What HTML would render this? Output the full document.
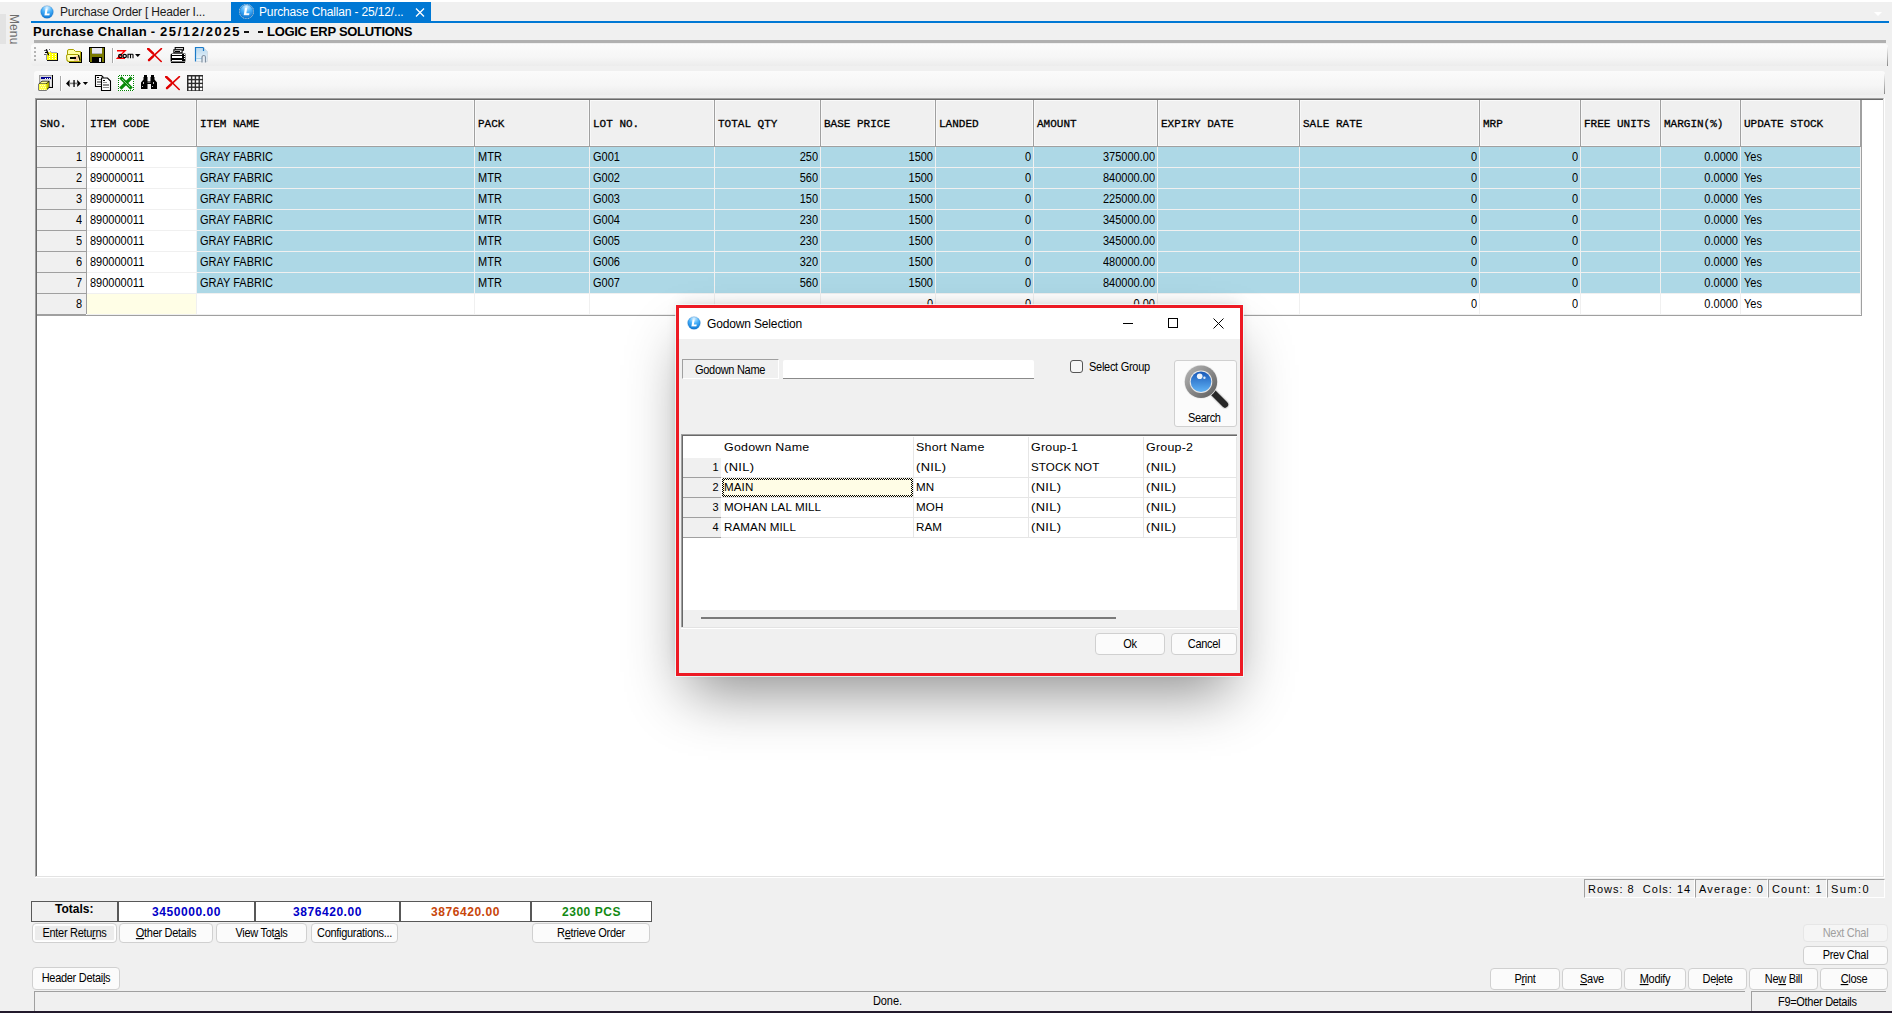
<!DOCTYPE html><html><head><meta charset="utf-8"><title>Purchase Challan</title><style>
*{box-sizing:border-box;margin:0;padding:0}
html,body{width:1892px;height:1013px;overflow:hidden}
body{position:relative;background:#f0f0f0;font-family:"Liberation Sans", sans-serif;font-size:11px;color:#000}
.ab{position:absolute}
.ms{transform:scaleY(1.125);transform-origin:0 10px}
.btn span{display:inline-block;transform:scaleY(1.125);transform-origin:0 75%}
.t{position:absolute;white-space:pre;line-height:1}
.hd{position:absolute;font:11px "Liberation Mono", monospace;-webkit-text-stroke:0.3px #000;white-space:pre;line-height:1}
.btn u{text-decoration:underline;text-underline-offset:1px}
.btn{position:absolute;background:#fbfbfb;border:1px solid #d0d0d0;border-radius:4px;text-align:center;white-space:pre;font-size:11px;letter-spacing:-0.3px}
.sunk{position:absolute;border-top:1px solid #a0a0a0;border-left:1px solid #a0a0a0;border-right:1px solid #fff;border-bottom:1px solid #fff}
</style></head><body>
<div class="ab" style="left:0;top:0;width:1892px;height:2px;background:#fff"></div>
<div class="ab" style="left:0;top:14px;width:6px;height:30px;background:#e3e3e3"></div>
<div class="t" style="left:8px;top:14px;writing-mode:vertical-rl;font-size:12px;color:#6d6d6d;letter-spacing:0.1px">Menu</div>
<svg class="ab" style="left:40px;top:5px" width="14" height="14" viewBox="0 0 14 14"><defs><radialGradient id="lg1" cx="0.5" cy="0.15" r="0.9"><stop offset="0" stop-color="#d8f0ff"/><stop offset="0.45" stop-color="#48b0fa"/><stop offset="1" stop-color="#0470d0"/></radialGradient></defs><circle cx="7" cy="7" r="6.3" fill="url(#lg1)" stroke="#1060b0" stroke-opacity="0.45" stroke-width="0.6"/><path d="M5.6 3.6h2.1l-0.85 5.0h2.9l-0.4 1.9H4.4z" fill="#fff"/><path d="M4.6 10.6h4.9" stroke="#0a4a90" stroke-opacity="0.35" stroke-width="0.5"/></svg>
<div class="t" style="left:60px;top:6px;font-size:12px;color:#1a1a1a;letter-spacing:-0.2px">Purchase Order [ Header I...</div>
<div class="ab" style="left:231px;top:2px;width:200px;height:20px;background:#0078d4"></div>
<svg class="ab" style="left:239px;top:4px" width="15" height="15" viewBox="0 0 14 14"><defs><radialGradient id="lg2" cx="0.5" cy="0.15" r="0.9"><stop offset="0" stop-color="#d8f0ff"/><stop offset="0.45" stop-color="#48b0fa"/><stop offset="1" stop-color="#0470d0"/></radialGradient></defs><circle cx="7" cy="7" r="6.3" fill="url(#lg2)" stroke="#1060b0" stroke-opacity="0.45" stroke-width="0.6"/><circle cx="7" cy="7" r="6.7" fill="none" stroke="#e8e0d8" stroke-width="0.8" stroke-dasharray="1 0.6"/><path d="M5.6 3.6h2.1l-0.85 5.0h2.9l-0.4 1.9H4.4z" fill="#fff"/><path d="M4.6 10.6h4.9" stroke="#0a4a90" stroke-opacity="0.35" stroke-width="0.5"/></svg>
<div class="t" style="left:259px;top:6px;font-size:12px;color:#fff;letter-spacing:-0.15px">Purchase Challan - 25/12/...</div>
<svg class="ab" style="left:415px;top:8px" width="10" height="9" viewBox="0 0 10 9"><path d="M1 0.5L9 8.5M9 0.5L1 8.5" stroke="#fff" stroke-width="1.3"/></svg>
<div class="ab" style="left:31px;top:21px;width:1858px;height:2px;background:#0078d4"></div>
<svg class="ab" style="left:1874px;top:12px" width="8" height="4" viewBox="0 0 8 4"><path d="M0 0h8L4 4z" fill="#fff"/></svg>
<div class="t" style="left:33px;top:25px;font-weight:bold;font-size:13px;letter-spacing:0.3px;color:#000">Purchase Challan -</div>
<div class="t" style="left:160px;top:25px;font-weight:bold;font-size:13px;letter-spacing:1.6px;color:#000">25/12/2025</div>
<div class="t" style="left:267px;top:25px;font-weight:bold;font-size:13px;letter-spacing:-0.3px;color:#000">LOGIC ERP SOLUTIONS</div>
<div class="ab" style="left:244px;top:31px;width:5px;height:2px;background:#111"></div>
<div class="ab" style="left:258px;top:31px;width:5px;height:2px;background:#111"></div>
<div class="ab" style="left:34px;top:40px;width:1852px;height:3px;background:#b0b0b0"></div>
<div class="ab" style="left:31px;top:44px;width:1857px;height:22px;border-radius:3px;background:linear-gradient(#fbfbfb,#f6f6f6 60%,#ececec)"></div>
<div class="ab" style="left:34px;top:71px;width:1851px;height:24px;border-radius:3px;background:linear-gradient(#fbfbfb,#f6f6f6 60%,#ececec)"></div>
<div class="ab" style="left:1887px;top:46px;width:1px;height:20px;background:linear-gradient(rgba(160,160,160,0),#8a8a8a)"></div>
<div class="ab" style="left:1884px;top:73px;width:1px;height:21px;background:linear-gradient(rgba(160,160,160,0),#8a8a8a)"></div>
<div class="ab" style="left:34px;top:47px;width:2px;height:2px;background:#b4b4b4"></div>
<div class="ab" style="left:34px;top:51px;width:2px;height:2px;background:#b4b4b4"></div>
<div class="ab" style="left:34px;top:55px;width:2px;height:2px;background:#b4b4b4"></div>
<div class="ab" style="left:34px;top:59px;width:2px;height:2px;background:#b4b4b4"></div>
<svg class="ab" style="left:43px;top:48px" width="16" height="14" viewBox="43 48 16 14" ><defs><pattern id="ydots" x="0" y="0" width="3" height="2" patternUnits="userSpaceOnUse"><rect width="3" height="2" fill="#ffff00"/><rect x="1" y="0" width="1" height="1" fill="#fffff0"/></pattern></defs><rect x="47" y="60" width="10" height="1" fill="#101018"/><rect x="57" y="53" width="1" height="8" fill="#101018"/><rect x="47" y="52" width="10" height="8" fill="url(#ydots)"/><rect x="46" y="54" width="1" height="6" fill="#9090a0"/><rect x="50" y="51" width="1" height="1" fill="#a8a8c0"/><rect x="51" y="52" width="6" height="1" fill="#a8a8c0"/><rect x="49" y="52" width="1" height="1" fill="#ffff60"/><path d="M46.3 49.2 L48.6 55.2" stroke="#000" stroke-width="1.3"/><rect x="45" y="52" width="3" height="1" fill="#000"/><rect x="44" y="50" width="2" height="1" fill="#606068"/><rect x="44" y="54" width="2" height="1" fill="#606068"/><rect x="49" y="49" width="1" height="1" fill="#606068"/></svg>
<svg class="ab" style="left:65px;top:48px" width="18" height="16" viewBox="65 48 18 16" ><rect x="69" y="62" width="13" height="1" fill="#000"/><rect x="81" y="52" width="1" height="11" fill="#000"/><path d="M67.5 54 V51 Q67.5 49.5 69 49.5 H73.5 L75.5 51.5 H80.5 V61.5 H69 Q67 61.5 67 60 Z" fill="#ffffa0" stroke="#a8a000" stroke-width="1"/><path d="M66.5 56 Q66.5 54.5 68 54.5 H78 L80.5 61.5 H69 Q67 61.5 67 59.5 Z" fill="#ffffb0" stroke="#a8a000" stroke-width="1"/><rect x="74" y="56" width="4" height="5" fill="#f8c8a0"/><rect x="70" y="57" width="6" height="2" fill="#000"/><path d="M78.5 55 L80 60.5" stroke="#000" stroke-width="1.1"/></svg>
<svg class="ab" style="left:89px;top:47px" width="16" height="16" viewBox="89 47 16 16" ><rect x="89" y="47" width="16" height="16" fill="#000"/><rect x="90" y="48" width="2" height="14" fill="#7a7a00"/><rect x="102" y="48" width="2" height="14" fill="#7a7a00"/><rect x="92" y="54" width="10" height="3" fill="#7a7a00"/><rect x="92" y="48" width="10" height="6" fill="#e8e8f0"/><rect x="92" y="53" width="10" height="1" fill="#b0b0b8"/><rect x="99" y="58" width="2" height="4" fill="#e8e8f0"/><rect x="89" y="62" width="1" height="1" fill="#f8f8f8"/></svg>
<div class="ab" style="left:112px;top:48px;width:1px;height:15px;background:#a8a8a8"></div>
<div class="ab" style="left:113px;top:48px;width:1px;height:15px;background:#fff"></div>
<svg class="ab" style="left:116px;top:49px" width="26" height="11" viewBox="116 49 26 11" ><path d="M117 50.7 H125 L117.5 58.2 H125" stroke="#ff0000" stroke-width="1.5" fill="none" stroke-linejoin="miter"/><circle cx="120.3" cy="56" r="1.7" fill="none" stroke="#000" stroke-width="1.2"/><circle cx="124.7" cy="56" r="1.7" fill="none" stroke="#000" stroke-width="1.2"/><path d="M128 58.3 V54.3 H132.5 Q133 54.3 133 55 V58.3 M130.5 54.3 V58.3" stroke="#000" stroke-width="1.1" fill="none"/><path d="M135 54 H140.5 L137.75 57 Z" fill="#000"/></svg>
<svg class="ab" style="left:147px;top:48px" width="16" height="15" viewBox="147 48 16 15" ><path d="M148.2 48.8 L161.2 61.5" stroke="#e00000" stroke-width="1.6" stroke-linecap="round"/><path d="M148.2 48.8 L153 53.4" stroke="#e00000" stroke-width="2.4" stroke-linecap="round"/><path d="M161.4 48.6 L149 60.2" stroke="#e00000" stroke-width="1.6" stroke-linecap="round"/><path d="M149 60.2 L153 56.4" stroke="#e00000" stroke-width="2.4" stroke-linecap="round"/></svg>
<svg class="ab" style="left:169px;top:47px" width="18" height="16" viewBox="169 47 18 16" ><rect x="175.2" y="47.6" width="8.3" height="2.6" fill="#fff" stroke="#000" stroke-width="1.1"/><rect x="173.9" y="49.8" width="8.2" height="3" fill="#fff" stroke="#000" stroke-width="1.1"/><rect x="175" y="51" width="5" height="1" fill="#000"/><path d="M170.6 61.5 V55 Q170.6 53.5 172 53.5 H185.4 V61.5 Z" fill="#000"/><rect x="172" y="54" width="10" height="1" fill="#fff"/><rect x="172" y="56" width="10" height="2" fill="#fff"/><rect x="172" y="60" width="10" height="1" fill="#fff"/><rect x="184" y="54" width="1" height="1" fill="#fff"/><rect x="184" y="56" width="1" height="1" fill="#fff"/><rect x="184" y="58" width="1" height="1" fill="#fff"/><rect x="171" y="62" width="14" height="1" fill="#000"/></svg>
<svg class="ab" style="left:194px;top:46px" width="15" height="18" viewBox="194 46 15 18" ><defs><linearGradient id="pvg" x1="0" y1="0" x2="0" y2="1"><stop offset="0" stop-color="#b8d8ee"/><stop offset="1" stop-color="#eef6fb"/></linearGradient></defs><path d="M195.5 47.5 H203.5 L207.5 51.5 V61.5 H195.5 Z" fill="url(#pvg)"/><path d="M195.5 61.5 V47.5 H203.5 V51" stroke="#1a7ac8" stroke-width="1.2" fill="none"/><path d="M203.5 47.5 L207.5 51.5 V61.5 H196" stroke="#d0d8e0" stroke-width="0.8" fill="none"/><rect x="196" y="58" width="7" height="1" fill="#a8d0ea"/><path d="M202 62.5 V57.5 Q202 55.5 204 55.5 Q205.5 55.5 205.5 57.5 V62.5" stroke="#8090a0" stroke-width="1.2" fill="#e8eef4"/></svg>
<svg class="ab" style="left:37px;top:74px" width="17" height="18" viewBox="37 74 17 18" ><rect x="39" y="75" width="13" height="1" fill="#a0a0a0"/><rect x="39" y="75" width="1" height="12" fill="#a0a0a0"/><rect x="52" y="75" width="1" height="13" fill="#000"/><rect x="40" y="87" width="13" height="1" fill="#000"/><rect x="40" y="76" width="12" height="11" fill="#d8d8d8"/><rect x="41" y="77" width="10" height="2" fill="#000090"/><rect x="45" y="78" width="1" height="1" fill="#fff"/><rect x="47" y="78" width="1" height="1" fill="#fff"/><rect x="49" y="78" width="1" height="1" fill="#fff"/><rect x="41" y="80" width="10" height="6" fill="#f0f0f0"/><path d="M38.5 90.5 V84 L42 80.8 H49.5 V87.5 L46.5 90.5 Z" fill="#000"/><rect x="39" y="84" width="8" height="6" fill="#ffff40"/><path d="M39.2 83.6 L42.3 81.5 H48.6 L46 83.6 Z" fill="#ffff90"/><path d="M46.5 84 L48.8 82 V87.2 L46.5 89.5 Z" fill="#c8c800"/><rect x="40" y="85" width="1" height="1" fill="#ffffc8"/><rect x="42" y="85" width="1" height="1" fill="#ffffc8"/><rect x="44" y="85" width="1" height="1" fill="#ffffc8"/><rect x="41" y="87" width="1" height="1" fill="#ffffc8"/><rect x="43" y="87" width="1" height="1" fill="#ffffc8"/><rect x="45" y="87" width="1" height="1" fill="#ffffc8"/><rect x="40" y="89" width="1" height="1" fill="#ffffc8"/><rect x="42" y="89" width="1" height="1" fill="#ffffc8"/><rect x="44" y="89" width="1" height="1" fill="#ffffc8"/></svg>
<div class="ab" style="left:60px;top:76px;width:1px;height:15px;background:#a8a8a8"></div>
<div class="ab" style="left:61px;top:76px;width:1px;height:15px;background:#fff"></div>
<svg class="ab" style="left:65px;top:79px" width="24" height="9" viewBox="65 79 24 9" ><path d="M66 83.4 L69.6 79.8 V87 Z" fill="#000"/><path d="M80.8 83.4 L77.2 79.8 V87 Z" fill="#000"/><rect x="69" y="82.6" width="9" height="1.6" fill="#808080"/><rect x="73.4" y="80" width="1.3" height="7" fill="#000"/><path d="M82.8 82 H88 L85.4 85 Z" fill="#000"/></svg>
<svg class="ab" style="left:94px;top:74px" width="18" height="18" viewBox="94 74 18 18" ><path d="M95.5 86.5 V75.5 H101.5 L103 77 V86.5 Z" fill="#fff" stroke="#000" stroke-width="1.1"/><rect x="97" y="77" width="2" height="1" fill="#000"/><rect x="97" y="79" width="4" height="1" fill="#909090"/><rect x="97" y="81" width="4" height="1" fill="#909090"/><rect x="97" y="82" width="4" height="1" fill="#909090"/><rect x="97" y="84" width="4" height="1" fill="#909090"/><path d="M101.5 90.5 V78 H107.5 L110.5 81 V90.5 Z" fill="#fff" stroke="#000" stroke-width="1.1"/><rect x="103" y="80" width="2" height="1" fill="#000"/><rect x="103" y="82" width="4" height="1" fill="#909090"/><rect x="103" y="84" width="6" height="1" fill="#909090"/><rect x="103" y="85" width="6" height="1" fill="#909090"/><rect x="103" y="87" width="6" height="1" fill="#909090"/></svg>
<svg class="ab" style="left:118px;top:75px" width="16" height="16" viewBox="118 75 16 16" ><defs><pattern id="gchk" x="0" y="0" width="2" height="2" patternUnits="userSpaceOnUse"><rect width="2" height="2" fill="#fff"/><rect width="1" height="1" fill="#008000"/><rect x="1" y="1" width="1" height="1" fill="#008000"/></pattern></defs><rect x="118" y="75" width="16" height="16" fill="url(#gchk)"/><rect x="119" y="76" width="14" height="14" fill="#fff"/><path d="M121.5 78.5 L130.5 87.5 M130.5 78.5 L121.5 87.5" stroke="#0a8a0a" stroke-width="3.2" stroke-linecap="square"/><path d="M122 79 L130 87" stroke="#c0e8c0" stroke-width="0.7"/></svg>
<svg class="ab" style="left:140px;top:74px" width="18" height="16" viewBox="140 74 18 16" ><rect x="144" y="75" width="3" height="2" fill="#000"/><rect x="151" y="75" width="3" height="2" fill="#000"/><path d="M143.5 77 H147.5 V81 H150.5 V77 H154.5 V79.5 L157 82.5 V89 H151 V84 H147.5 V89 H141 V82.5 L143.5 79.5 Z" fill="#000"/><rect x="147.5" y="81" width="3" height="2" fill="#707070"/><rect x="143" y="82" width="1" height="2" fill="#c0c0c0"/><rect x="153" y="82" width="1" height="2" fill="#c0c0c0"/><rect x="142" y="86" width="1" height="1" fill="#c0c0c0"/><rect x="152" y="86" width="1" height="1" fill="#c0c0c0"/></svg>
<svg class="ab" style="left:165px;top:76px" width="16" height="15" viewBox="165 76 16 15" ><path d="M166.2 76.8 L179.2 89.5" stroke="#e00000" stroke-width="1.6" stroke-linecap="round"/><path d="M166.2 76.8 L171 81.4" stroke="#e00000" stroke-width="2.4" stroke-linecap="round"/><path d="M179.4 76.6 L167 88.2" stroke="#e00000" stroke-width="1.6" stroke-linecap="round"/><path d="M167 88.2 L171 84.4" stroke="#e00000" stroke-width="2.4" stroke-linecap="round"/></svg>
<svg class="ab" style="left:187px;top:75px" width="16" height="16" viewBox="187 75 16 16" ><rect x="187" y="75" width="16" height="16" fill="#2c2c2c"/><rect x="188.5" y="76.5" width="2.4" height="2.4" fill="#fff"/><rect x="188.5" y="80.3" width="2.4" height="2.4" fill="#fff"/><rect x="188.5" y="84.1" width="2.4" height="2.4" fill="#fff"/><rect x="188.5" y="87.9" width="2.4" height="2.4" fill="#fff"/><rect x="192.3" y="76.5" width="2.4" height="2.4" fill="#fff"/><rect x="192.3" y="80.3" width="2.4" height="2.4" fill="#fff"/><rect x="192.3" y="84.1" width="2.4" height="2.4" fill="#fff"/><rect x="192.3" y="87.9" width="2.4" height="2.4" fill="#fff"/><rect x="196.1" y="76.5" width="2.4" height="2.4" fill="#fff"/><rect x="196.1" y="80.3" width="2.4" height="2.4" fill="#fff"/><rect x="196.1" y="84.1" width="2.4" height="2.4" fill="#fff"/><rect x="196.1" y="87.9" width="2.4" height="2.4" fill="#fff"/><rect x="199.9" y="76.5" width="2.4" height="2.4" fill="#fff"/><rect x="199.9" y="80.3" width="2.4" height="2.4" fill="#fff"/><rect x="199.9" y="84.1" width="2.4" height="2.4" fill="#fff"/><rect x="199.9" y="87.9" width="2.4" height="2.4" fill="#fff"/></svg>
<div class="ab" style="left:35px;top:98px;width:1849px;height:779px;background:#fff;border-top:1px solid #a0a0a0;border-left:1px solid #a0a0a0;border-right:1px solid #e3e3e3;border-bottom:1px solid #e3e3e3"></div>
<div class="ab" style="left:36px;top:99px;width:1847px;height:1px;background:#696969"></div>
<div class="ab" style="left:1884px;top:98px;width:1px;height:780px;background:#fff"></div>
<div class="ab" style="left:35px;top:877px;width:1850px;height:1px;background:#fff"></div>
<div class="ab" style="left:36px;top:99px;width:1px;height:777px;background:#696969"></div>
<div class="ab" style="left:37px;top:100px;width:1823px;height:46px;background:#f0f0f0"></div>
<div class="ab" style="left:37px;top:146px;width:1824px;height:1px;background:#a0a0a0"></div>
<div class="ab" style="left:37px;top:100px;width:1823px;height:1px;background:#fafafa"></div>
<div class="ab" style="left:37px;top:145px;width:1823px;height:1px;background:#f8f8f8"></div>
<div class="ab" style="left:37px;top:100px;width:1px;height:46px;background:#fafafa"></div>
<div class="ab" style="left:85px;top:101px;width:3px;height:45px;background:#f8f8f8"></div>
<div class="ab" style="left:86px;top:100px;width:1px;height:47px;background:#a0a0a0"></div>
<div class="ab" style="left:195px;top:101px;width:3px;height:45px;background:#f8f8f8"></div>
<div class="ab" style="left:196px;top:100px;width:1px;height:47px;background:#a0a0a0"></div>
<div class="ab" style="left:473px;top:101px;width:3px;height:45px;background:#f8f8f8"></div>
<div class="ab" style="left:474px;top:100px;width:1px;height:47px;background:#a0a0a0"></div>
<div class="ab" style="left:588px;top:101px;width:3px;height:45px;background:#f8f8f8"></div>
<div class="ab" style="left:589px;top:100px;width:1px;height:47px;background:#a0a0a0"></div>
<div class="ab" style="left:713px;top:101px;width:3px;height:45px;background:#f8f8f8"></div>
<div class="ab" style="left:714px;top:100px;width:1px;height:47px;background:#a0a0a0"></div>
<div class="ab" style="left:819px;top:101px;width:3px;height:45px;background:#f8f8f8"></div>
<div class="ab" style="left:820px;top:100px;width:1px;height:47px;background:#a0a0a0"></div>
<div class="ab" style="left:934px;top:101px;width:3px;height:45px;background:#f8f8f8"></div>
<div class="ab" style="left:935px;top:100px;width:1px;height:47px;background:#a0a0a0"></div>
<div class="ab" style="left:1032px;top:101px;width:3px;height:45px;background:#f8f8f8"></div>
<div class="ab" style="left:1033px;top:100px;width:1px;height:47px;background:#a0a0a0"></div>
<div class="ab" style="left:1156px;top:101px;width:3px;height:45px;background:#f8f8f8"></div>
<div class="ab" style="left:1157px;top:100px;width:1px;height:47px;background:#a0a0a0"></div>
<div class="ab" style="left:1298px;top:101px;width:3px;height:45px;background:#f8f8f8"></div>
<div class="ab" style="left:1299px;top:100px;width:1px;height:47px;background:#a0a0a0"></div>
<div class="ab" style="left:1478px;top:101px;width:3px;height:45px;background:#f8f8f8"></div>
<div class="ab" style="left:1479px;top:100px;width:1px;height:47px;background:#a0a0a0"></div>
<div class="ab" style="left:1579px;top:101px;width:3px;height:45px;background:#f8f8f8"></div>
<div class="ab" style="left:1580px;top:100px;width:1px;height:47px;background:#a0a0a0"></div>
<div class="ab" style="left:1659px;top:101px;width:3px;height:45px;background:#f8f8f8"></div>
<div class="ab" style="left:1660px;top:100px;width:1px;height:47px;background:#a0a0a0"></div>
<div class="ab" style="left:1739px;top:101px;width:3px;height:45px;background:#f8f8f8"></div>
<div class="ab" style="left:1740px;top:100px;width:1px;height:47px;background:#a0a0a0"></div>
<div class="ab" style="left:1859px;top:101px;width:3px;height:45px;background:#f8f8f8"></div>
<div class="ab" style="left:1860px;top:100px;width:2px;height:47px;background:#a0a0a0"></div>
<div class="hd" style="left:40px;top:119px">SNO.</div>
<div class="hd" style="left:90px;top:119px">ITEM CODE</div>
<div class="hd" style="left:200px;top:119px">ITEM NAME</div>
<div class="hd" style="left:478px;top:119px">PACK</div>
<div class="hd" style="left:593px;top:119px">LOT NO.</div>
<div class="hd" style="left:718px;top:119px">TOTAL QTY</div>
<div class="hd" style="left:824px;top:119px">BASE PRICE</div>
<div class="hd" style="left:939px;top:119px">LANDED</div>
<div class="hd" style="left:1037px;top:119px">AMOUNT</div>
<div class="hd" style="left:1161px;top:119px">EXPIRY DATE</div>
<div class="hd" style="left:1303px;top:119px">SALE RATE</div>
<div class="hd" style="left:1483px;top:119px">MRP</div>
<div class="hd" style="left:1584px;top:119px">FREE UNITS</div>
<div class="hd" style="left:1664px;top:119px">MARGIN(%)</div>
<div class="hd" style="left:1744px;top:119px">UPDATE STOCK</div>
<div class="ab" style="left:37px;top:147px;width:49px;height:20px;background:#f0f0f0"></div>
<div class="ab" style="left:37px;top:167px;width:49px;height:1px;background:#a0a0a0"></div>
<div class="ab" style="left:87px;top:147px;width:109px;height:20px;background:#fff"></div>
<div class="ab" style="left:197px;top:147px;width:1663px;height:20px;background:#add8e6"></div>
<div class="ab" style="left:87px;top:167px;width:1773px;height:1px;background:#f0f0f0"></div>
<div class="t ms" style="right:1810px;top:152px">1</div>
<div class="t ms" style="left:90px;top:152px">890000011</div>
<div class="t ms" style="left:200px;top:152px">GRAY FABRIC</div>
<div class="t ms" style="left:478px;top:152px">MTR</div>
<div class="t ms" style="left:593px;top:152px">G001</div>
<div class="t ms" style="right:1074px;top:152px">250</div>
<div class="t ms" style="right:959px;top:152px">1500</div>
<div class="t ms" style="right:861px;top:152px">0</div>
<div class="t ms" style="right:737px;top:152px">375000.00</div>
<div class="t ms" style="right:415px;top:152px">0</div>
<div class="t ms" style="right:314px;top:152px">0</div>
<div class="t ms" style="right:154px;top:152px">0.0000</div>
<div class="t ms" style="left:1744px;top:152px">Yes</div>
<div class="ab" style="left:37px;top:168px;width:49px;height:20px;background:#f0f0f0"></div>
<div class="ab" style="left:37px;top:188px;width:49px;height:1px;background:#a0a0a0"></div>
<div class="ab" style="left:87px;top:168px;width:109px;height:20px;background:#fff"></div>
<div class="ab" style="left:197px;top:168px;width:1663px;height:20px;background:#add8e6"></div>
<div class="ab" style="left:87px;top:188px;width:1773px;height:1px;background:#f0f0f0"></div>
<div class="t ms" style="right:1810px;top:173px">2</div>
<div class="t ms" style="left:90px;top:173px">890000011</div>
<div class="t ms" style="left:200px;top:173px">GRAY FABRIC</div>
<div class="t ms" style="left:478px;top:173px">MTR</div>
<div class="t ms" style="left:593px;top:173px">G002</div>
<div class="t ms" style="right:1074px;top:173px">560</div>
<div class="t ms" style="right:959px;top:173px">1500</div>
<div class="t ms" style="right:861px;top:173px">0</div>
<div class="t ms" style="right:737px;top:173px">840000.00</div>
<div class="t ms" style="right:415px;top:173px">0</div>
<div class="t ms" style="right:314px;top:173px">0</div>
<div class="t ms" style="right:154px;top:173px">0.0000</div>
<div class="t ms" style="left:1744px;top:173px">Yes</div>
<div class="ab" style="left:37px;top:189px;width:49px;height:20px;background:#f0f0f0"></div>
<div class="ab" style="left:37px;top:209px;width:49px;height:1px;background:#a0a0a0"></div>
<div class="ab" style="left:87px;top:189px;width:109px;height:20px;background:#fff"></div>
<div class="ab" style="left:197px;top:189px;width:1663px;height:20px;background:#add8e6"></div>
<div class="ab" style="left:87px;top:209px;width:1773px;height:1px;background:#f0f0f0"></div>
<div class="t ms" style="right:1810px;top:194px">3</div>
<div class="t ms" style="left:90px;top:194px">890000011</div>
<div class="t ms" style="left:200px;top:194px">GRAY FABRIC</div>
<div class="t ms" style="left:478px;top:194px">MTR</div>
<div class="t ms" style="left:593px;top:194px">G003</div>
<div class="t ms" style="right:1074px;top:194px">150</div>
<div class="t ms" style="right:959px;top:194px">1500</div>
<div class="t ms" style="right:861px;top:194px">0</div>
<div class="t ms" style="right:737px;top:194px">225000.00</div>
<div class="t ms" style="right:415px;top:194px">0</div>
<div class="t ms" style="right:314px;top:194px">0</div>
<div class="t ms" style="right:154px;top:194px">0.0000</div>
<div class="t ms" style="left:1744px;top:194px">Yes</div>
<div class="ab" style="left:37px;top:210px;width:49px;height:20px;background:#f0f0f0"></div>
<div class="ab" style="left:37px;top:230px;width:49px;height:1px;background:#a0a0a0"></div>
<div class="ab" style="left:87px;top:210px;width:109px;height:20px;background:#fff"></div>
<div class="ab" style="left:197px;top:210px;width:1663px;height:20px;background:#add8e6"></div>
<div class="ab" style="left:87px;top:230px;width:1773px;height:1px;background:#f0f0f0"></div>
<div class="t ms" style="right:1810px;top:215px">4</div>
<div class="t ms" style="left:90px;top:215px">890000011</div>
<div class="t ms" style="left:200px;top:215px">GRAY FABRIC</div>
<div class="t ms" style="left:478px;top:215px">MTR</div>
<div class="t ms" style="left:593px;top:215px">G004</div>
<div class="t ms" style="right:1074px;top:215px">230</div>
<div class="t ms" style="right:959px;top:215px">1500</div>
<div class="t ms" style="right:861px;top:215px">0</div>
<div class="t ms" style="right:737px;top:215px">345000.00</div>
<div class="t ms" style="right:415px;top:215px">0</div>
<div class="t ms" style="right:314px;top:215px">0</div>
<div class="t ms" style="right:154px;top:215px">0.0000</div>
<div class="t ms" style="left:1744px;top:215px">Yes</div>
<div class="ab" style="left:37px;top:231px;width:49px;height:20px;background:#f0f0f0"></div>
<div class="ab" style="left:37px;top:251px;width:49px;height:1px;background:#a0a0a0"></div>
<div class="ab" style="left:87px;top:231px;width:109px;height:20px;background:#fff"></div>
<div class="ab" style="left:197px;top:231px;width:1663px;height:20px;background:#add8e6"></div>
<div class="ab" style="left:87px;top:251px;width:1773px;height:1px;background:#f0f0f0"></div>
<div class="t ms" style="right:1810px;top:236px">5</div>
<div class="t ms" style="left:90px;top:236px">890000011</div>
<div class="t ms" style="left:200px;top:236px">GRAY FABRIC</div>
<div class="t ms" style="left:478px;top:236px">MTR</div>
<div class="t ms" style="left:593px;top:236px">G005</div>
<div class="t ms" style="right:1074px;top:236px">230</div>
<div class="t ms" style="right:959px;top:236px">1500</div>
<div class="t ms" style="right:861px;top:236px">0</div>
<div class="t ms" style="right:737px;top:236px">345000.00</div>
<div class="t ms" style="right:415px;top:236px">0</div>
<div class="t ms" style="right:314px;top:236px">0</div>
<div class="t ms" style="right:154px;top:236px">0.0000</div>
<div class="t ms" style="left:1744px;top:236px">Yes</div>
<div class="ab" style="left:37px;top:252px;width:49px;height:20px;background:#f0f0f0"></div>
<div class="ab" style="left:37px;top:272px;width:49px;height:1px;background:#a0a0a0"></div>
<div class="ab" style="left:87px;top:252px;width:109px;height:20px;background:#fff"></div>
<div class="ab" style="left:197px;top:252px;width:1663px;height:20px;background:#add8e6"></div>
<div class="ab" style="left:87px;top:272px;width:1773px;height:1px;background:#f0f0f0"></div>
<div class="t ms" style="right:1810px;top:257px">6</div>
<div class="t ms" style="left:90px;top:257px">890000011</div>
<div class="t ms" style="left:200px;top:257px">GRAY FABRIC</div>
<div class="t ms" style="left:478px;top:257px">MTR</div>
<div class="t ms" style="left:593px;top:257px">G006</div>
<div class="t ms" style="right:1074px;top:257px">320</div>
<div class="t ms" style="right:959px;top:257px">1500</div>
<div class="t ms" style="right:861px;top:257px">0</div>
<div class="t ms" style="right:737px;top:257px">480000.00</div>
<div class="t ms" style="right:415px;top:257px">0</div>
<div class="t ms" style="right:314px;top:257px">0</div>
<div class="t ms" style="right:154px;top:257px">0.0000</div>
<div class="t ms" style="left:1744px;top:257px">Yes</div>
<div class="ab" style="left:37px;top:273px;width:49px;height:20px;background:#f0f0f0"></div>
<div class="ab" style="left:37px;top:293px;width:49px;height:1px;background:#a0a0a0"></div>
<div class="ab" style="left:87px;top:273px;width:109px;height:20px;background:#fff"></div>
<div class="ab" style="left:197px;top:273px;width:1663px;height:20px;background:#add8e6"></div>
<div class="ab" style="left:87px;top:293px;width:1773px;height:1px;background:#f0f0f0"></div>
<div class="t ms" style="right:1810px;top:278px">7</div>
<div class="t ms" style="left:90px;top:278px">890000011</div>
<div class="t ms" style="left:200px;top:278px">GRAY FABRIC</div>
<div class="t ms" style="left:478px;top:278px">MTR</div>
<div class="t ms" style="left:593px;top:278px">G007</div>
<div class="t ms" style="right:1074px;top:278px">560</div>
<div class="t ms" style="right:959px;top:278px">1500</div>
<div class="t ms" style="right:861px;top:278px">0</div>
<div class="t ms" style="right:737px;top:278px">840000.00</div>
<div class="t ms" style="right:415px;top:278px">0</div>
<div class="t ms" style="right:314px;top:278px">0</div>
<div class="t ms" style="right:154px;top:278px">0.0000</div>
<div class="t ms" style="left:1744px;top:278px">Yes</div>
<div class="ab" style="left:37px;top:294px;width:49px;height:20px;background:#f0f0f0"></div>
<div class="ab" style="left:37px;top:314px;width:49px;height:1px;background:#a0a0a0"></div>
<div class="ab" style="left:87px;top:294px;width:109px;height:20px;background:#fffee6"></div>
<div class="t ms" style="right:1810px;top:299px">8</div>
<div class="t ms" style="right:959px;top:299px">0</div>
<div class="t ms" style="right:861px;top:299px">0</div>
<div class="t ms" style="right:737px;top:299px">0.00</div>
<div class="t ms" style="right:415px;top:299px">0</div>
<div class="t ms" style="right:314px;top:299px">0</div>
<div class="t ms" style="right:154px;top:299px">0.0000</div>
<div class="t ms" style="left:1744px;top:299px">Yes</div>
<div class="ab" style="left:86px;top:147px;width:1px;height:167px;background:#a0a0a0"></div>
<div class="ab" style="left:196px;top:147px;width:1px;height:167px;background:#f0f0f0"></div>
<div class="ab" style="left:474px;top:147px;width:1px;height:167px;background:#f0f0f0"></div>
<div class="ab" style="left:589px;top:147px;width:1px;height:167px;background:#f0f0f0"></div>
<div class="ab" style="left:714px;top:147px;width:1px;height:167px;background:#f0f0f0"></div>
<div class="ab" style="left:820px;top:147px;width:1px;height:167px;background:#f0f0f0"></div>
<div class="ab" style="left:935px;top:147px;width:1px;height:167px;background:#f0f0f0"></div>
<div class="ab" style="left:1033px;top:147px;width:1px;height:167px;background:#f0f0f0"></div>
<div class="ab" style="left:1157px;top:147px;width:1px;height:167px;background:#f0f0f0"></div>
<div class="ab" style="left:1299px;top:147px;width:1px;height:167px;background:#f0f0f0"></div>
<div class="ab" style="left:1479px;top:147px;width:1px;height:167px;background:#f0f0f0"></div>
<div class="ab" style="left:1580px;top:147px;width:1px;height:167px;background:#f0f0f0"></div>
<div class="ab" style="left:1660px;top:147px;width:1px;height:167px;background:#f0f0f0"></div>
<div class="ab" style="left:1740px;top:147px;width:1px;height:167px;background:#f0f0f0"></div>
<div class="ab" style="left:1860px;top:147px;width:1px;height:167px;background:#f0f0f0"></div>
<div class="ab" style="left:1861px;top:147px;width:1px;height:169px;background:#a0a0a0"></div>
<div class="ab" style="left:37px;top:315px;width:1825px;height:1px;background:#a0a0a0"></div>
<div class="ab" style="left:37px;top:314px;width:49px;height:1px;background:#a0a0a0"></div>
<div class="ab" style="left:87px;top:314px;width:1773px;height:1px;background:#f0f0f0"></div>
<div class="ab" style="left:676px;top:305px;width:567px;height:371px;box-shadow:0 28px 56px -12px rgba(0,0,0,0.45),0 -6px 14px -4px rgba(0,0,0,0.11),0 0 6px rgba(0,0,0,0.04)"></div>
<div class="ab" style="left:676px;top:305px;width:567px;height:371px;border:3px solid #ed1a24;background:#f0f0f0;outline:1px solid rgba(240,255,255,0.75)"></div>
<div class="ab" style="left:679px;top:308px;width:561px;height:31px;background:#fff"></div>
<svg class="ab" style="left:687px;top:316px" width="14" height="14" viewBox="0 0 14 14"><defs><radialGradient id="lg3" cx="0.5" cy="0.15" r="0.9"><stop offset="0" stop-color="#d8f0ff"/><stop offset="0.45" stop-color="#48b0fa"/><stop offset="1" stop-color="#0470d0"/></radialGradient></defs><circle cx="7" cy="7" r="6.3" fill="url(#lg3)" stroke="#1060b0" stroke-opacity="0.45" stroke-width="0.6"/><path d="M5.6 3.6h2.1l-0.85 5.0h2.9l-0.4 1.9H4.4z" fill="#fff"/><path d="M4.6 10.6h4.9" stroke="#0a4a90" stroke-opacity="0.35" stroke-width="0.5"/></svg>
<div class="t" style="left:707px;top:318px;font-size:12px;letter-spacing:-0.15px">Godown Selection</div>
<div class="ab" style="left:1123px;top:323px;width:10px;height:1px;background:#000"></div>
<div class="ab" style="left:1168px;top:318px;width:10px;height:10px;border:1px solid #000"></div>
<svg class="ab" style="left:1213px;top:318px" width="11" height="11" viewBox="0 0 11 11"><path d="M0.5 0.5L10.5 10.5M10.5 0.5L0.5 10.5" stroke="#000" stroke-width="1"/></svg>
<div class="sunk" style="left:682px;top:359px;width:97px;height:20px;background:#f0f0f0"></div>
<div class="t ms" style="left:695px;top:365px;letter-spacing:-0.3px">Godown Name</div>
<div class="ab" style="left:783px;top:360px;width:251px;height:19px;background:#fff;border-bottom:1px solid #8a8a8a;border-radius:2px 2px 0 0"></div>
<div class="ab" style="left:1070px;top:360px;width:13px;height:13px;border:1px solid #555;border-radius:3px;background:#f6f6f6"></div>
<div class="t ms" style="left:1089px;top:362px;letter-spacing:-0.28px">Select Group</div>
<div class="ab" style="left:1174px;top:360px;width:63px;height:67px;background:#fbfbfb;border:1px solid #d0d0d0;border-radius:3px"></div>
<svg class="ab" style="left:1176px;top:362px" width="60" height="50" viewBox="1176 362 60 50">
<defs><linearGradient id="mg" x1="0" y1="0" x2="0" y2="1"><stop offset="0" stop-color="#1858b8"/><stop offset="1" stop-color="#62b4f6"/></linearGradient>
<linearGradient id="rg" x1="0" y1="0" x2="1" y2="1"><stop offset="0" stop-color="#b8b8b8"/><stop offset="1" stop-color="#5a5a5a"/></linearGradient></defs>
<path d="M1212.5 392 L1225 404.5" stroke="#e0e0e0" stroke-width="9" stroke-linecap="round"/>
<path d="M1212.5 392 L1225 404.5" stroke="#262626" stroke-width="6.4" stroke-linecap="round"/>
<circle cx="1201" cy="381.8" r="17" fill="#ececec"/>
<circle cx="1201" cy="381.8" r="16.2" fill="url(#rg)"/>
<circle cx="1201" cy="381.8" r="11.3" fill="#e8e8e8"/>
<circle cx="1201" cy="381.8" r="10.3" fill="url(#mg)"/>
<circle cx="1199.7" cy="376.2" r="2.8" fill="#fff" opacity="0.92"/><circle cx="1204.4" cy="377.8" r="1.2" fill="#fff" opacity="0.85"/></svg>
<div class="t ms" style="left:1188px;top:413px;letter-spacing:-0.4px">Search</div>
<div class="ab" style="left:681px;top:434px;width:556px;height:193px;background:#fff;border-top:1px solid #a0a0a0;border-left:1px solid #a0a0a0"></div>
<div class="ab" style="left:682px;top:435px;width:555px;height:1px;background:#696969"></div>
<div class="ab" style="left:682px;top:435px;width:1px;height:192px;background:#696969"></div>
<div class="ab" style="left:681px;top:627px;width:557px;height:1px;background:#e3e3e3"></div>
<div class="ab" style="left:681px;top:628px;width:557px;height:1px;background:#fff"></div>
<div class="ab" style="left:683px;top:458px;width:38px;height:79px;background:#f0f0f0"></div>
<div class="ab" style="left:683px;top:477px;width:38px;height:1px;background:#a0a0a0"></div>
<div class="ab" style="left:721px;top:477px;width:516px;height:1px;background:#e6e6e6"></div>
<div class="ab" style="left:683px;top:497px;width:38px;height:1px;background:#a0a0a0"></div>
<div class="ab" style="left:721px;top:497px;width:516px;height:1px;background:#e6e6e6"></div>
<div class="ab" style="left:683px;top:517px;width:38px;height:1px;background:#a0a0a0"></div>
<div class="ab" style="left:721px;top:517px;width:516px;height:1px;background:#e6e6e6"></div>
<div class="ab" style="left:683px;top:537px;width:38px;height:1px;background:#a0a0a0"></div>
<div class="ab" style="left:721px;top:537px;width:516px;height:1px;background:#e6e6e6"></div>
<div class="ab" style="left:913px;top:437px;width:1px;height:101px;background:#e6e6e6"></div>
<div class="ab" style="left:1028px;top:437px;width:1px;height:101px;background:#e6e6e6"></div>
<div class="ab" style="left:1143px;top:437px;width:1px;height:101px;background:#e6e6e6"></div>
<div class="ab" style="left:1236px;top:437px;width:1px;height:101px;background:#e6e6e6"></div>
<div class="ab" style="left:683px;top:610px;width:554px;height:17px;background:#f0f0f0"></div>
<div class="ab" style="left:701px;top:617px;width:415px;height:2px;background:#7a7a7a"></div>
<div class="ab" style="left:722px;top:478px;width:191px;height:19px;background:conic-gradient(#000 25%,#fffde6 0 50%,#000 0 75%,#fffde6 0) 0 0/2px 2px"></div>
<div class="ab" style="left:724px;top:480px;width:187px;height:15px;background:#fffde6"></div>
<div class="t" style="left:724px;top:442px;letter-spacing:0.2px;transform:scaleX(1.13);transform-origin:0 0">Godown Name</div>
<div class="t" style="left:916px;top:442px;letter-spacing:0.2px;transform:scaleX(1.13);transform-origin:0 0">Short Name</div>
<div class="t" style="left:1031px;top:442px;letter-spacing:0.2px;transform:scaleX(1.13);transform-origin:0 0">Group-1</div>
<div class="t" style="left:1146px;top:442px;letter-spacing:0.2px;transform:scaleX(1.13);transform-origin:0 0">Group-2</div>
<div class="t" style="right:1173px;top:462px;letter-spacing:0.3px">1</div>
<div class="t" style="left:724px;top:462px;letter-spacing:0.3px;transform:scaleX(1.17);transform-origin:0 0">(NIL)</div>
<div class="t" style="left:916px;top:462px;letter-spacing:0.3px;transform:scaleX(1.17);transform-origin:0 0">(NIL)</div>
<div class="t" style="left:1031px;top:462px;letter-spacing:0.1px;transform:scaleX(1.055);transform-origin:0 0">STOCK NOT</div>
<div class="t" style="left:1146px;top:462px;letter-spacing:0.3px;transform:scaleX(1.17);transform-origin:0 0">(NIL)</div>
<div class="t" style="right:1173px;top:482px;letter-spacing:0.3px">2</div>
<div class="t" style="left:724px;top:482px;letter-spacing:0.1px;transform:scaleX(1.055);transform-origin:0 0">MAIN</div>
<div class="t" style="left:916px;top:482px;letter-spacing:0.1px;transform:scaleX(1.055);transform-origin:0 0">MN</div>
<div class="t" style="left:1031px;top:482px;letter-spacing:0.3px;transform:scaleX(1.17);transform-origin:0 0">(NIL)</div>
<div class="t" style="left:1146px;top:482px;letter-spacing:0.3px;transform:scaleX(1.17);transform-origin:0 0">(NIL)</div>
<div class="t" style="right:1173px;top:502px;letter-spacing:0.3px">3</div>
<div class="t" style="left:724px;top:502px;letter-spacing:0.1px;transform:scaleX(1.055);transform-origin:0 0">MOHAN LAL MILL</div>
<div class="t" style="left:916px;top:502px;letter-spacing:0.1px;transform:scaleX(1.055);transform-origin:0 0">MOH</div>
<div class="t" style="left:1031px;top:502px;letter-spacing:0.3px;transform:scaleX(1.17);transform-origin:0 0">(NIL)</div>
<div class="t" style="left:1146px;top:502px;letter-spacing:0.3px;transform:scaleX(1.17);transform-origin:0 0">(NIL)</div>
<div class="t" style="right:1173px;top:522px;letter-spacing:0.3px">4</div>
<div class="t" style="left:724px;top:522px;letter-spacing:0.1px;transform:scaleX(1.055);transform-origin:0 0">RAMAN MILL</div>
<div class="t" style="left:916px;top:522px;letter-spacing:0.1px;transform:scaleX(1.055);transform-origin:0 0">RAM</div>
<div class="t" style="left:1031px;top:522px;letter-spacing:0.3px;transform:scaleX(1.17);transform-origin:0 0">(NIL)</div>
<div class="t" style="left:1146px;top:522px;letter-spacing:0.3px;transform:scaleX(1.17);transform-origin:0 0">(NIL)</div>
<div class="btn" style="left:1095px;top:633px;width:70px;height:22px;line-height:20px"><span>Ok</span></div>
<div class="btn" style="left:1171px;top:633px;width:66px;height:22px;line-height:20px"><span>Cancel</span></div>
<div class="sunk" style="left:1584px;top:879px;width:111px;height:19px"></div>
<div class="t" style="left:1588px;top:884px;letter-spacing:1.0px">Rows: 8  Cols: 14</div>
<div class="sunk" style="left:1695px;top:879px;width:73px;height:19px"></div>
<div class="t" style="left:1699px;top:884px;letter-spacing:1.2px">Average: 0</div>
<div class="sunk" style="left:1768px;top:879px;width:59px;height:19px"></div>
<div class="t" style="left:1772px;top:884px;letter-spacing:1.15px">Count: 1</div>
<div class="sunk" style="left:1827px;top:879px;width:58px;height:19px"></div>
<div class="t" style="left:1831px;top:884px;letter-spacing:1.45px">Sum:0</div>
<div class="ab" style="left:31px;top:901px;width:87px;height:21px;background:#f0f0f0;border:1px solid #585858"></div>
<div class="ab" style="left:118px;top:901px;width:137px;height:21px;background:#fff;border:1px solid #585858"></div>
<div class="ab" style="left:255px;top:901px;width:145px;height:21px;background:#fff;border:1px solid #585858"></div>
<div class="ab" style="left:400px;top:901px;width:131px;height:21px;background:#fff;border:1px solid #585858"></div>
<div class="ab" style="left:531px;top:901px;width:121px;height:21px;background:#fff;border:1px solid #585858"></div>
<div class="t" style="left:55px;top:903px;font-weight:bold;font-size:12px">Totals:</div>
<div class="t" style="left:118px;width:137px;text-align:center;top:906px;font-weight:bold;font-size:12px;letter-spacing:0.55px;color:#0000c8">3450000.00</div>
<div class="t" style="left:255px;width:145px;text-align:center;top:906px;font-weight:bold;font-size:12px;letter-spacing:0.55px;color:#0000c8">3876420.00</div>
<div class="t" style="left:400px;width:131px;text-align:center;top:906px;font-weight:bold;font-size:12px;letter-spacing:0.55px;color:#c8460a">3876420.00</div>
<div class="t" style="left:531px;width:121px;text-align:center;top:906px;font-weight:bold;font-size:12px;letter-spacing:0.55px;color:#138a13">2300 PCS</div>
<div class="btn" style="left:32px;top:923px;width:85px;height:20px;line-height:18px;background:#ececec;box-shadow:inset 0 0 0 1px #fff,inset 0 0 0 2px #fcfcfc;"><span>Enter Retu<u>r</u>ns</span></div>
<div class="btn" style="left:119px;top:923px;width:94px;height:20px;line-height:18px;"><span><u>O</u>ther Details</span></div>
<div class="btn" style="left:216px;top:923px;width:91px;height:20px;line-height:18px;"><span>View Tot<u>a</u>ls</span></div>
<div class="btn" style="left:311px;top:923px;width:87px;height:20px;line-height:18px;"><span>Confi<u>g</u>urations...</span></div>
<div class="btn" style="left:532px;top:923px;width:118px;height:20px;line-height:18px;"><span>R<u>e</u>trieve Order</span></div>
<div class="btn" style="left:32px;top:967px;width:88px;height:23px;line-height:21px"><span>Header Detai<u>l</u>s</span></div>
<div class="btn" style="left:1803px;top:924px;width:85px;height:18px;line-height:16px;color:#a0a0a0;background:#f5f5f5;border-color:#e6e6e6"><span>Next Chal</span></div>
<div class="btn" style="left:1803px;top:946px;width:85px;height:19px;line-height:17px"><span>Prev Chal</span></div>
<div class="btn" style="left:1490px;top:968px;width:70px;height:22px;line-height:20px"><span>P<u>r</u>int</span></div>
<div class="btn" style="left:1562px;top:968px;width:60px;height:22px;line-height:20px"><span><u>S</u>ave</span></div>
<div class="btn" style="left:1624px;top:968px;width:62px;height:22px;line-height:20px"><span><u>M</u>odify</span></div>
<div class="btn" style="left:1688px;top:968px;width:59px;height:22px;line-height:20px"><span>De<u>l</u>ete</span></div>
<div class="btn" style="left:1749px;top:968px;width:69px;height:22px;line-height:20px"><span>Ne<u>w</u> Bill</span></div>
<div class="btn" style="left:1820px;top:968px;width:68px;height:22px;line-height:20px"><span><u>C</u>lose</span></div>
<div class="ab" style="left:34px;top:991px;width:1711px;height:20px;border-top:1px solid #a0a0a0;border-left:1px solid #a0a0a0"></div>
<div class="t ms" style="left:873px;top:996px;letter-spacing:-0.1px">Done.</div>
<div class="ab" style="left:1751px;top:991px;width:135px;height:20px;border-top:1px solid #a0a0a0;border-left:1px solid #a0a0a0"></div>
<div class="t ms" style="left:1778px;top:997px;letter-spacing:-0.3px">F9=Other Details</div>
<div class="ab" style="left:0;top:1011px;width:1892px;height:2px;background:#221a2c"></div>
</body></html>
